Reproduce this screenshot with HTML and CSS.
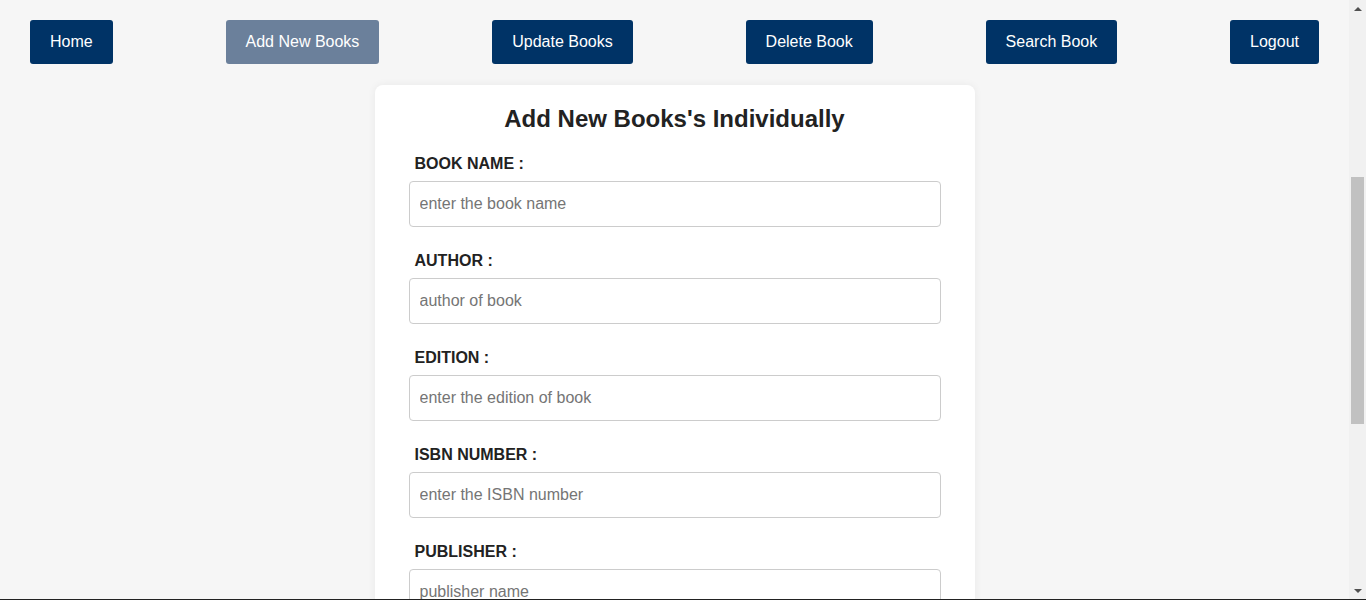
FILE: index.html
```html
<!DOCTYPE html>
<html lang="en">
<head>
<meta charset="utf-8">
<title>Add New Books</title>
<link rel="stylesheet" href="styles.css">
</head>
<body>
<div class="window">
  <div class="content">
    <nav class="nav">
      <a class="nav-btn" href="#">Home</a>
      <a class="nav-btn active" href="#">Add New Books</a>
      <a class="nav-btn" href="#">Update Books</a>
      <a class="nav-btn" href="#">Delete Book</a>
      <a class="nav-btn" href="#">Search Book</a>
      <a class="nav-btn" href="#">Logout</a>
    </nav>
    <main class="card">
      <h2 class="title">Add New Books's Individually</h2>
      <form class="form">
        <div class="field">
          <label class="label" for="bname">BOOK NAME :</label>
          <input class="input" id="bname" type="text" placeholder="enter the book name">
        </div>
        <div class="field">
          <label class="label" for="author">AUTHOR :</label>
          <input class="input" id="author" type="text" placeholder="author of book">
        </div>
        <div class="field">
          <label class="label" for="edition">EDITION :</label>
          <input class="input" id="edition" type="text" placeholder="enter the edition of book">
        </div>
        <div class="field">
          <label class="label" for="isbn">ISBN NUMBER :</label>
          <input class="input" id="isbn" type="text" placeholder="enter the ISBN number">
        </div>
        <div class="field">
          <label class="label" for="publisher">PUBLISHER :</label>
          <input class="input" id="publisher" type="text" placeholder="publisher name">
        </div>
        <button class="submit" type="submit">Add Book</button>
      </form>
    </main>
  </div>
  <div class="scrollbar" aria-hidden="true">
    <div class="sb-btn"><span class="arrow-up"></span></div>
    <div class="sb-track"><div class="sb-thumb"></div></div>
    <div class="sb-btn"><span class="arrow-down"></span></div>
  </div>
</div>
</body>
</html>
```
FILE: styles.css
```css
* {
  box-sizing: border-box;
}

html,
body {
  margin: 0;
  height: 100%;
  overflow: hidden;
}

body {
  background: #f6f6f6;
  font-family: "Liberation Sans", Arial, sans-serif;
  color: #222;
}

.window {
  display: flex;
  height: 100vh;
  border-bottom: 1px solid #222;
}

.content {
  flex: 1;
  min-width: 0;
  overflow: hidden;
  background: #f6f6f6;
}

/* scrollbar strip */
.scrollbar {
  width: 17px;
  flex: none;
  display: flex;
  flex-direction: column;
  background: #f1f1f1;
}

.sb-btn {
  height: 17px;
  display: flex;
  align-items: center;
  justify-content: center;
}

.arrow-up,
.arrow-down {
  width: 0;
  height: 0;
  border-left: 4px solid transparent;
  border-right: 4px solid transparent;
}

.arrow-up {
  border-bottom: 4px solid #505050;
}

.arrow-down {
  border-top: 4px solid #505050;
}

.sb-track {
  flex: 1;
  padding: 0 2px;
}

.sb-thumb {
  margin-top: 160px;
  height: 247px;
  background: #c1c1c1;
}

/* navigation */
.nav {
  display: flex;
  justify-content: space-between;
  align-items: center;
  padding: 20px 30px 21px;
}

.nav-btn {
  display: block;
  background: #003366;
  color: #fff;
  text-decoration: none;
  font-size: 16px;
  line-height: 20px;
  padding: 12px 20px;
  border-radius: 3px;
}

.nav-btn.active {
  background: #6b809b;
}

/* card */
.card {
  width: 600px;
  margin: 0 auto;
  background: #fff;
  border-radius: 8px;
  box-shadow: 0 0 8px rgba(0, 0, 0, 0.06);
  padding: 20px 34px 30px;
}

.title {
  margin: 0 0 22px;
  text-align: center;
  font-size: 24px;
  line-height: 28px;
  font-weight: bold;
  color: #222;
}

.form {
  display: flex;
  flex-direction: column;
}

.field {
  display: flex;
  flex-direction: column;
  margin-bottom: 25px;
}

.label {
  font-size: 16px;
  line-height: 18px;
  font-weight: bold;
  color: #222;
  margin: 0 0 8px 6px;
}

.input {
  width: 100%;
  height: 46px;
  border: 1px solid #ccc;
  border-radius: 4px;
  padding: 0 10px;
  font-family: "Liberation Sans", Arial, sans-serif;
  font-size: 16px;
  color: #222;
  background: #fff;
}

.input::placeholder {
  color: #757575;
}

.submit {
  align-self: center;
  background: #003366;
  color: #fff;
  border: none;
  border-radius: 3px;
  font-family: "Liberation Sans", Arial, sans-serif;
  font-size: 16px;
  padding: 12px 24px;
}
```
